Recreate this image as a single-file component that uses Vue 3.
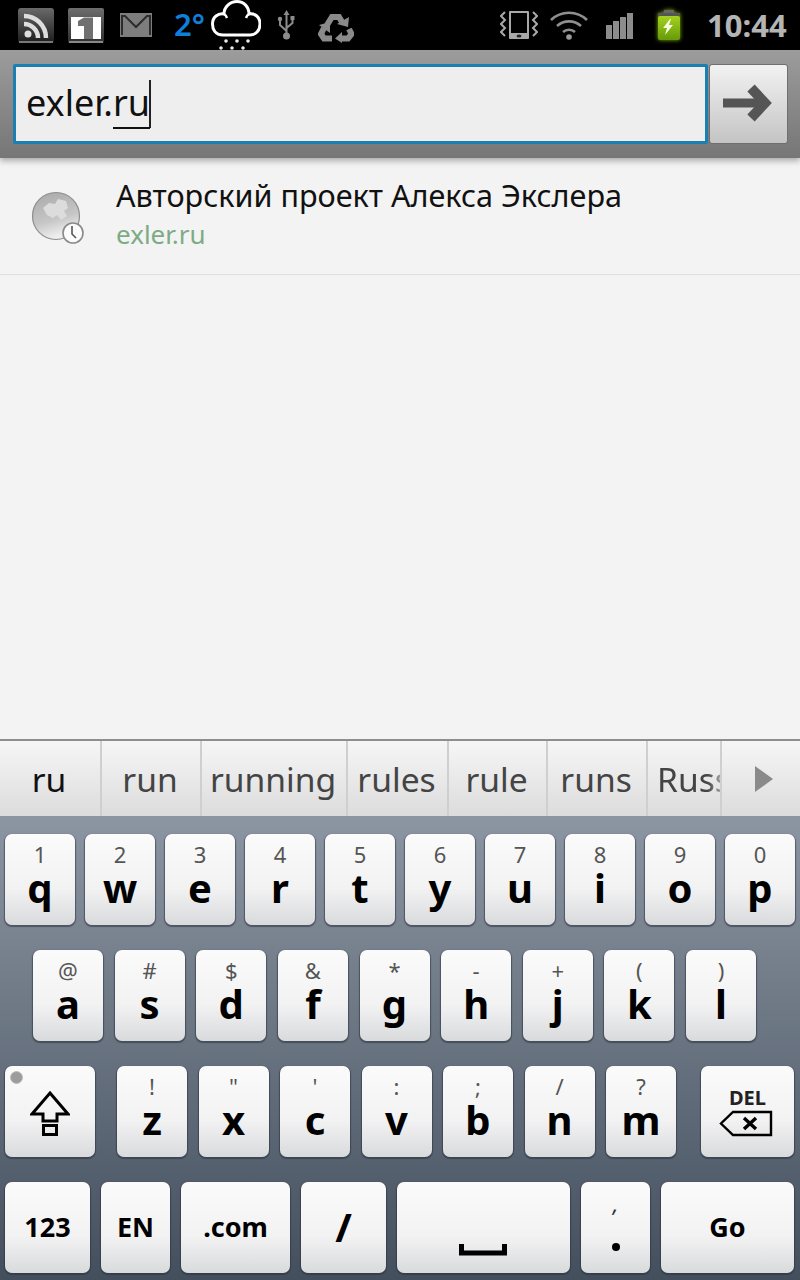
<script setup>
const row1 = [['1', 'q'], ['2', 'w'], ['3', 'e'], ['4', 'r'], ['5', 't'], ['6', 'y'], ['7', 'u'], ['8', 'i'], ['9', 'o'], ['0', 'p']]
const row2 = [['@', 'a'], ['#', 's'], ['$', 'd'], ['&', 'f'], ['*', 'g'], ['-', 'h'], ['+', 'j'], ['(', 'k'], [')', 'l']]
const row3 = [['!', 'z'], ['"', 'x'], ["'", 'c'], [':', 'v'], [';', 'b'], ['/', 'n'], ['?', 'm']]
const words = [
  { text: 'ru', width: 102, main: true },
  { text: 'run', width: 100 },
  { text: 'running', width: 146 },
  { text: 'rules', width: 101 },
  { text: 'rule', width: 99 },
  { text: 'runs', width: 100 },
  { text: 'Russ', width: 74, cut: true }
]
</script>

<template>
  <div class="phone">
    <div class="status-bar">
      <svg class="ic-rss" width="36" height="36" viewBox="0 0 36 36">
        <defs>
          <linearGradient id="rssbg" x1="0" y1="0" x2="0" y2="1">
            <stop offset="0" stop-color="#6a6a6a" />
            <stop offset="1" stop-color="#1c1c1c" />
          </linearGradient>
        </defs>
        <rect x="0" y="0" width="36" height="35" rx="3" fill="url(#rssbg)" />
        <rect x="1" y="33" width="34" height="2" fill="#777" />
        <circle cx="10" cy="26" r="3.5" fill="#ddd" />
        <path d="M6 16a14 14 0 0 1 14 14M6 8a22 22 0 0 1 22 22" fill="none" stroke="#ddd" stroke-width="4.5" />
      </svg>
      <svg class="ic-cal" width="36" height="36" viewBox="0 0 36 36">
        <defs>
          <linearGradient id="calbg" x1="0" y1="0" x2="0" y2="1">
            <stop offset="0" stop-color="#6e6e6e" />
            <stop offset="1" stop-color="#2e2e2e" />
          </linearGradient>
        </defs>
        <rect x="0" y="0" width="36" height="35" rx="2" fill="url(#calbg)" />
        <rect x="3" y="9" width="30" height="22" fill="#fff" />
        <rect x="1" y="33" width="34" height="2" fill="#888" />
        <path d="M16 9.5h9V31h-9V18h-6v-5z" fill="#707070" />
      </svg>
      <svg class="ic-mail" width="32" height="24" viewBox="0 0 32 24">
        <rect width="32" height="24" fill="#7d7d7d" />
        <path d="M2 22V3h3l11 11L27 3h3v19" fill="none" stroke="#2c2c2c" stroke-width="2" />
      </svg>
      <span class="temp">2°</span>
      <svg class="ic-cloud" width="50" height="50" viewBox="0 0 50 50">
        <path d="M12 35C4 35 1.5 29 1.5 24C1.5 17 7 13 13 14C13 7 19 1.5 26 1.5C33 1.5 38 7 38 14C44 13 49 17 49 24C49 30 45 35 39 35Z" fill="none" stroke="#fff" stroke-width="3" />
        <path d="M13 14Q15 15 16 18M38 14Q36 15 35 18" fill="none" stroke="#fff" stroke-width="2.4" />
        <g fill="#eee">
          <circle cx="15" cy="41" r="1.8" /><circle cx="26" cy="41" r="1.8" /><circle cx="37" cy="41" r="1.8" />
          <circle cx="10" cy="48" r="1.8" /><circle cx="21" cy="48" r="1.8" /><circle cx="32" cy="48" r="1.8" />
        </g>
      </svg>
      <svg class="ic-usb" width="19" height="30" viewBox="0 0 19 30">
        <path d="M9.5 3v22M9.5 21L3 15V10M9.5 18l6-5V9" fill="none" stroke="#8c8c8c" stroke-width="2" />
        <path d="M9.5 0l3 5h-6z" fill="#8c8c8c" />
        <circle cx="9.5" cy="26" r="3.5" fill="#8c8c8c" />
        <circle cx="3" cy="9" r="2.2" fill="#8c8c8c" />
        <rect x="13.5" y="6" width="4" height="4" fill="#8c8c8c" />
      </svg>
      <svg class="ic-recycle" width="36" height="31" viewBox="0 0 36 31">
        <g fill="none" stroke="#8a8a8a" stroke-width="6">
          <path d="M9 13L14 5H21L24 10" />
          <path d="M31 17L33.5 22L30 26.5H23" />
          <path d="M14 26.5H6L3 22L6 16" />
        </g>
        <g fill="#8a8a8a">
          <path d="M19 12L30 15L31 5z" />
          <path d="M24 20L17 26.5L24 31z" />
          <path d="M1 13L12 10L12 21z" />
        </g>
      </svg>
      <svg class="ic-vibrate" width="38" height="30" viewBox="0 0 38 30">
        <rect x="9" y="1" width="20" height="28" rx="1" fill="#a8a8a8" />
        <rect x="11" y="3" width="16" height="20" fill="#000" />
        <ellipse cx="19" cy="26" rx="2.5" ry="1.5" fill="#222" />
        <path d="M5 2L1 6l4 4-4 4 4 4-4 4 4 4M33 2l4 4-4 4 4 4-4 4 4 4-4 4" fill="none" stroke="#a8a8a8" stroke-width="2" />
      </svg>
      <svg class="ic-wifi" width="38" height="30" viewBox="0 0 38 30">
        <g fill="none" stroke="#8f8f8f" stroke-width="2.6">
          <path d="M1 10a26 26 0 0 1 36 0" />
          <path d="M7 16a18 18 0 0 1 24 0" />
          <path d="M13 22a9 9 0 0 1 12 0" />
        </g>
        <circle cx="19" cy="27" r="2.8" fill="#9a9a9a" />
      </svg>
      <svg class="ic-signal" width="28" height="28" viewBox="0 0 28 28">
        <g fill="#8c8c8c">
          <rect x="0" y="13" width="6" height="14" />
          <rect x="7" y="9" width="6" height="18" />
          <rect x="14" y="5" width="6" height="22" />
          <rect x="21" y="1" width="6" height="26" />
        </g>
      </svg>
      <svg class="ic-battery" width="24" height="31" viewBox="0 0 24 31">
        <defs>
          <linearGradient id="batt" x1="0" y1="0" x2="0" y2="1">
            <stop offset="0" stop-color="#a5d21e" />
            <stop offset="1" stop-color="#669a08" />
          </linearGradient>
        </defs>
        <rect x="7" y="0" width="10" height="3" fill="#666" />
        <rect x="1" y="3" width="22" height="5" fill="#555" />
        <rect x="1" y="6" width="22" height="24" rx="2" fill="url(#batt)" />
        <path d="M13 9L6 18H10L8 25L16 15H12L14 9z" fill="#f4f8e0" />
      </svg>
      <span class="clock">10:44</span>
    </div>

    <div class="url-bar">
      <div class="url-field">
        <span class="typed">exler.<span class="compose">ru</span></span><span class="caret"></span>
      </div>
      <div class="go-btn">
        <svg width="54" height="44" viewBox="0 0 54 44">
          <rect x="1" y="16.5" width="38" height="9" fill="#555" />
          <path d="M29 6L43 21 29 36" fill="none" stroke="#555" stroke-width="10" />
        </svg>
      </div>
    </div>

    <div class="results">
      <div class="result">
        <svg class="globe" width="54" height="54" viewBox="0 0 54 54">
          <defs>
            <linearGradient id="globebg" x1="0" y1="0" x2="0.3" y2="1">
              <stop offset="0" stop-color="#a8a8a8" />
              <stop offset="0.65" stop-color="#c6c6c6" />
              <stop offset="1" stop-color="#eeeeee" />
            </linearGradient>
          </defs>
          <circle cx="25" cy="25" r="23.5" fill="url(#globebg)" stroke="#8d8d8d" stroke-width="1.2" />
          <path d="M12 17L18 12L24 13L27 8L35 10L37 17L33 20L36 25L30 29L26 24L22 27L16 24Z" fill="#dcdcdc" />
          <circle cx="42" cy="42" r="10" fill="#fbfbfb" stroke="#8a8a8a" stroke-width="1.6" />
          <path d="M41 35v8l4 4" fill="none" stroke="#555" stroke-width="1.6" />
        </svg>
        <div class="result-text">
          <div class="result-title">Авторский проект Алекса Экслера</div>
          <div class="result-url">exler.ru</div>
        </div>
      </div>
    </div>

    <div class="candidates">
      <div
        v-for="w in words"
        :key="w.text"
        class="cand"
        :class="{ main: w.main, cut: w.cut }"
        :style="{ width: w.width + 'px' }"
      >
        <span>{{ w.text }}</span>
      </div>
      <div class="cand-more">
        <svg width="18" height="26" viewBox="0 0 18 26"><path d="M0 0l18 13L0 26z" fill="#8a8a8a" /></svg>
      </div>
    </div>

    <div class="keyboard">
      <div class="kb-row row1">
        <div v-for="k in row1" :key="k[1]" class="key">
          <span class="hint">{{ k[0] }}</span>
          <span class="letter">{{ k[1] }}</span>
        </div>
      </div>
      <div class="kb-row row2">
        <div v-for="k in row2" :key="k[1]" class="key">
          <span class="hint">{{ k[0] }}</span>
          <span class="letter">{{ k[1] }}</span>
        </div>
      </div>
      <div class="kb-row row3">
        <div class="key shift">
          <span class="led"></span>
          <svg width="40" height="46" viewBox="0 0 40 46">
            <path d="M20 3L38 24H27V31H13V24H2z" fill="none" stroke="#000" stroke-width="3" />
            <rect x="13.5" y="35.5" width="13" height="9" fill="none" stroke="#000" stroke-width="3" />
          </svg>
        </div>
        <div class="row3-letters">
          <div v-for="k in row3" :key="k[1]" class="key">
            <span class="hint">{{ k[0] }}</span>
            <span class="letter">{{ k[1] }}</span>
          </div>
        </div>
        <div class="key del">
          <span class="del-label">DEL</span>
          <svg width="54" height="28" viewBox="0 0 54 28">
            <path d="M14 2H52V25H14L2 13.5z" fill="none" stroke="#000" stroke-width="2.4" />
            <path d="M25 8l12 11M37 8L25 19" stroke="#000" stroke-width="3.4" />
          </svg>
        </div>
      </div>
      <div class="kb-row row4">
        <div class="key label k123">123</div>
        <div class="key label ken">EN</div>
        <div class="key label kcom">.com</div>
        <div class="key label kslash">/</div>
        <div class="key kspace">
          <svg width="48" height="12" viewBox="0 0 48 12"><path d="M2.5 0v9h43V0" fill="none" stroke="#000" stroke-width="5" /></svg>
        </div>
        <div class="key kdot"><span class="dot-hint">,</span><span class="dot-main"></span></div>
        <div class="key label kgo">Go</div>
      </div>
    </div>
  </div>
</template>

<style>
html, body {
  margin: 0;
  background: #000;
}
</style>

<style scoped>
.phone {
  width: 800px;
  height: 1280px;
  display: flex;
  flex-direction: column;
  overflow: hidden;
  font-family: "Noto Sans", "Open Sans", sans-serif;
  background: #f3f3f3;
}

.status-bar {
  height: 50px;
  flex: none;
  background: #000;
  display: flex;
  align-items: flex-start;
}
.status-bar svg { flex: none; display: block; }
.ic-rss { margin: 8px 0 0 18px; }
.ic-cal { margin: 8px 0 0 14px; }
.ic-mail { margin: 13px 0 0 16px; }
.temp {
  margin: 4px 0 0 22px;
  width: 37px;
  font-size: 31px;
  line-height: 40px;
  font-weight: 600;
  color: #0f7fdc;
}
.ic-cloud { margin: 0; }
.ic-usb { margin: 10px 0 0 16px; }
.ic-recycle { margin: 12px 0 0 22px; }
.ic-vibrate { margin: 10px 0 0 146px; }
.ic-wifi { margin: 10px 0 0 12px; }
.ic-signal { margin: 12px 0 0 18px; }
.ic-battery {
  margin: 10px 0 0 23px;
  filter: drop-shadow(0 0 2px #7fb800);
}
.clock {
  margin: 5px 0 0 26px;
  font-size: 31px;
  line-height: 40px;
  font-weight: 700;
  color: #b4b4b4;
}

.url-bar {
  height: 108px;
  flex: none;
  box-sizing: border-box;
  padding: 14px 12px 14px 13px;
  display: flex;
  background: linear-gradient(#9c9c9c, #767676);
  box-shadow: 0 3px 6px rgba(0, 0, 0, 0.3);
  position: relative;
  z-index: 1;
}
.url-field {
  width: 695px;
  height: 80px;
  box-sizing: border-box;
  border: 3.5px solid #1b7fb3;
  border-radius: 2px;
  background: #eeeeee;
  display: flex;
  align-items: center;
  padding: 0 0 0 10px;
  color: #111;
  font-size: 36px;
}
.typed { line-height: 40px; position: relative; top: -1px; }
.compose { border-bottom: 2px solid #111; }
.caret {
  width: 2px;
  height: 48px;
  background: #222;
  margin-left: -1px;
}
.go-btn {
  width: 79px;
  height: 80px;
  margin-left: 1px;
  box-sizing: border-box;
  border: 1px solid #6f6f6f;
  border-radius: 3px;
  background: linear-gradient(#f2f2f2, #c4c4c4);
  display: flex;
  align-items: center;
  justify-content: center;
}

.results {
  flex: 1;
  background: #f3f3f3;
}
.result {
  height: 117px;
  box-sizing: border-box;
  border-bottom: 1px solid #e0e0e0;
  display: flex;
  padding-left: 31px;
}
.globe {
  flex: none;
  margin-top: 33px;
}
.result-text {
  margin-left: 31px;
}
.result-title {
  margin-top: 16px;
  font-size: 30.6px;
  line-height: 42px;
  color: #111;
}
.result-url {
  font-size: 26px;
  line-height: 34px;
  margin-top: 1px;
  color: #7dab85;
}

.candidates {
  height: 77px;
  flex: none;
  box-sizing: border-box;
  border-top: 2px solid #8e8e8e;
  background: linear-gradient(#f6f6f6, #dcdcdc);
  display: flex;
}
.cand {
  flex: none;
  box-sizing: border-box;
  border-right: 2px solid #cfcfcf;
  padding-right: 2px;
  display: flex;
  align-items: center;
  justify-content: center;
  overflow: hidden;
  white-space: nowrap;
  font-size: 33.6px;
  color: #444;
}
.cand.main { color: #111; }
.cand.cut {
  justify-content: flex-start;
  padding-left: 9px;
  padding-right: 0;
}
.cand.cut span {
  -webkit-mask-image: linear-gradient(to right, #000 68%, transparent 100%);
  mask-image: linear-gradient(to right, #000 68%, transparent 100%);
}
.cand-more {
  flex: 1;
  display: flex;
  align-items: center;
  justify-content: center;
  padding-left: 6px;
}

.keyboard {
  flex: none;
  height: 464px;
  box-sizing: border-box;
  padding-top: 18px;
  background: linear-gradient(#8c96a2, #444f5e);
  display: flex;
  flex-direction: column;
  gap: 25px;
}
.kb-row {
  display: flex;
  height: 91px;
  flex: none;
}
.key {
  flex: none;
  width: 70px;
  height: 91px;
  box-sizing: border-box;
  border-radius: 7px;
  background: linear-gradient(#fbfbfb 0%, #f2f2f3 60%, #d9dadc 100%);
  box-shadow: 0 1px 1px 1px rgba(40, 48, 60, 0.55);
  position: relative;
  display: flex;
  flex-direction: column;
  align-items: center;
  color: #000;
}
.hint {
  font-size: 22px;
  line-height: 24px;
  margin-top: 8px;
  color: #555;
}
.letter {
  font-size: 40px;
  font-weight: 700;
  line-height: 46px;
  margin-top: -1px;
}
.row1 {
  padding: 0 5px;
  justify-content: space-between;
}
.row2 {
  padding: 0 44px 0 33px;
  justify-content: space-between;
}
.row3 {
  padding: 0 6px 0 5px;
}
.row3-letters {
  width: 559px;
  margin-left: 22px;
  display: flex;
  justify-content: space-between;
}
.shift {
  width: 90px;
  justify-content: center;
}
.shift svg { display: block; margin-top: 2px; }
.led {
  position: absolute;
  left: 5px;
  top: 5px;
  width: 13px;
  height: 13px;
  border-radius: 50%;
  background: #9c9c9c;
  border: 1px solid #bdbdbd;
  box-sizing: border-box;
}
.del { width: 93px; margin-left: auto; }
.del-label {
  font-size: 20px;
  font-weight: 700;
  line-height: 24px;
  margin-top: 20px;
  color: #222;
}
.del svg { display: block; margin: 0 0 0 -3px; }
.row4 {
  padding: 0 6px 0 5px;
  justify-content: space-between;
}
.label {
  justify-content: center;
  flex-direction: row;
  align-items: center;
  font-size: 27px;
  font-weight: 700;
  padding-bottom: 3px;
}
.k123 { width: 85px; }
.ken { width: 69px; }
.kcom { width: 109px; }
.kslash { width: 85px; font-size: 40px; }
.kspace { width: 173px; justify-content: flex-end; padding-bottom: 17px; }
.kspace svg { display: block; margin-right: 2px; }
.kdot { width: 69px; }
.dot-hint {
  font-size: 22px;
  line-height: 20px;
  margin-top: 11px;
  color: #333;
  font-style: italic;
}
.dot-main {
  width: 8px;
  height: 8px;
  border-radius: 50%;
  background: #000;
  margin-top: 30px;
}
.kgo { width: 133px; }
</style>
